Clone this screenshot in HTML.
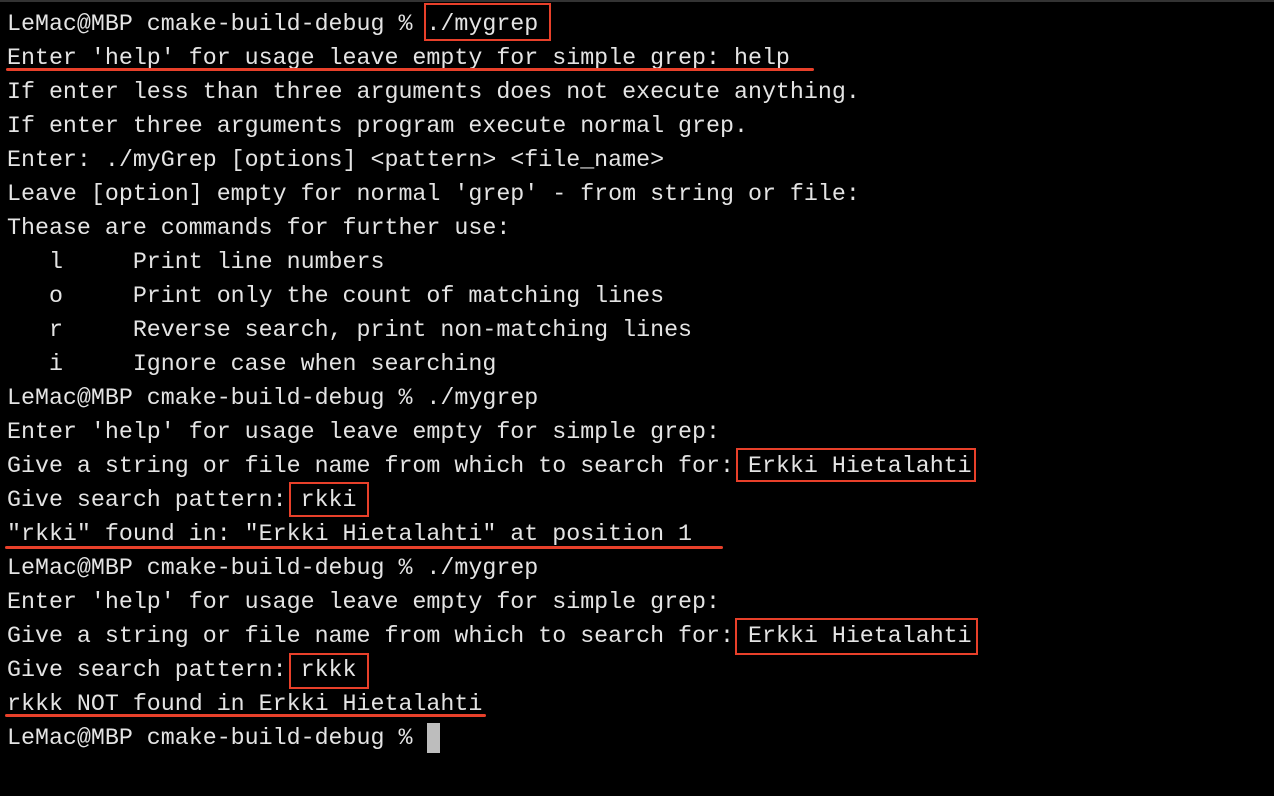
<!DOCTYPE html>
<html><head><meta charset="utf-8"><style>
html,body{margin:0;padding:0;background:#000;width:1274px;height:796px;overflow:hidden}
body{position:relative}
pre{margin:0;position:absolute;left:7px;top:7px;font-family:"Liberation Mono",monospace;font-size:23.3px;line-height:34px;color:#e4e4e4}
.b{position:absolute;border:2.5px solid #e8402a;box-sizing:border-box}
.u{position:absolute;height:3px;background:#e8402a;border-radius:2px}
.top{position:absolute;left:0;top:0;width:1274px;height:2px;background:#333}
.cur{position:absolute;left:427px;top:723px;width:13px;height:30px;background:#bdbdbd}
</style></head><body>
<div class="top"></div>
<pre>LeMac@MBP cmake-build-debug % ./mygrep
Enter 'help' for usage leave empty for simple grep: help
If enter less than three arguments does not execute anything.
If enter three arguments program execute normal grep.
Enter: ./myGrep [options] &lt;pattern&gt; &lt;file_name&gt;
Leave [option] empty for normal 'grep' - from string or file:
Thease are commands for further use:
   l     Print line numbers
   o     Print only the count of matching lines
   r     Reverse search, print non-matching lines
   i     Ignore case when searching
LeMac@MBP cmake-build-debug % ./mygrep
Enter 'help' for usage leave empty for simple grep:
Give a string or file name from which to search for: Erkki Hietalahti
Give search pattern: rkki
"rkki" found in: "Erkki Hietalahti" at position 1
LeMac@MBP cmake-build-debug % ./mygrep
Enter 'help' for usage leave empty for simple grep:
Give a string or file name from which to search for: Erkki Hietalahti
Give search pattern: rkkk
rkkk NOT found in Erkki Hietalahti
LeMac@MBP cmake-build-debug % </pre>
<div class="b" style="left:424px;top:3px;width:127px;height:38px"></div>
<div class="u" style="left:6px;top:68px;width:808px"></div>
<div class="b" style="left:736px;top:448px;width:240px;height:34px"></div>
<div class="b" style="left:289px;top:482px;width:80px;height:35px"></div>
<div class="u" style="left:5px;top:546px;width:718px"></div>
<div class="b" style="left:735px;top:618px;width:243px;height:37px"></div>
<div class="b" style="left:289px;top:653px;width:80px;height:36px"></div>
<div class="u" style="left:5px;top:714px;width:481px"></div>
<div class="cur"></div>
</body></html>
